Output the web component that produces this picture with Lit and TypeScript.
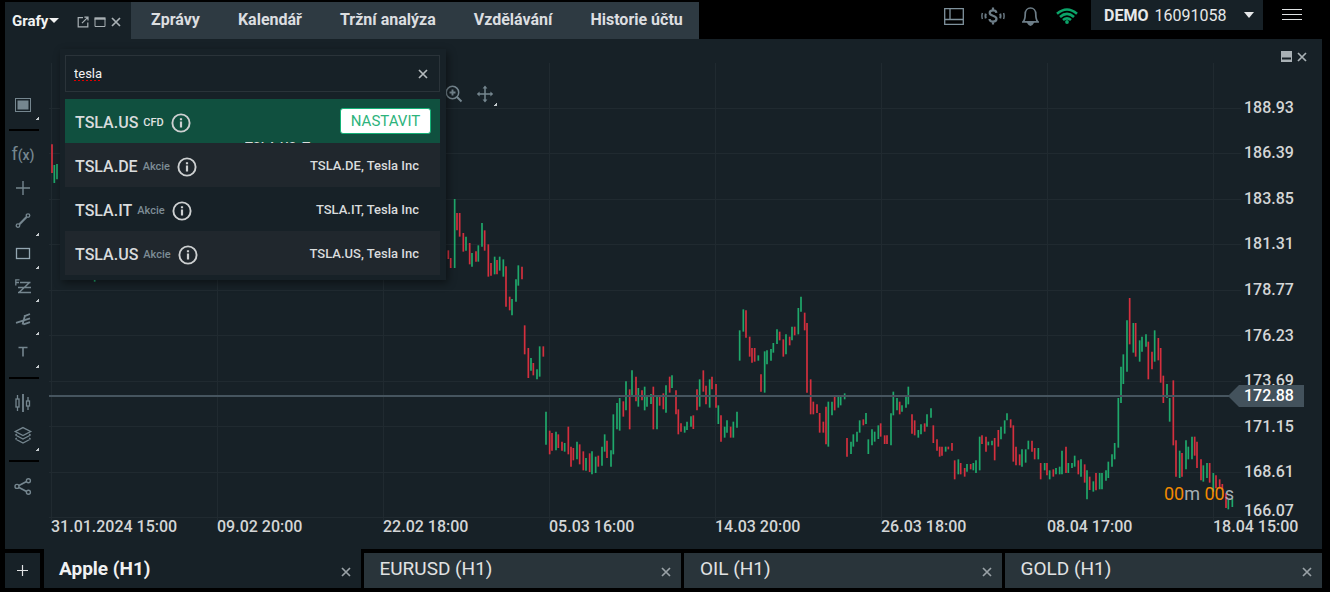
import { LitElement, html, svg, css } from "lit";
import { customElement, property, state } from "lit/decorators.js";
import { classMap } from "lit/directives/class-map.js";

type Bar = { x: number; top: number; bottom: number; up: boolean };

/* Each run holds bars as "x top bottom direction", in thirds of a chart unit from the run's origin. */
const RUNS: { x: number; y: number; bars: string }[] = [
  {
    x: 0,
    y: 85,
    bars: "156 178 264 r,163 240 294 g,171 237 283 g,284 570 590 g",
  },
  {
    x: 440,
    y: 180,
    bars:
      "25 211 237 r,32 234 264 r,44 57 264 g,51 99 151 r,59 99 170 r,70 159 215 r,78 170 212 g,89 189 253 r," +
      "96 219 260 g,108 214 245 r,115 196 245 g,126 129 200 g,134 151 212 r,145 193 290 r,153 249 287 r," +
      "164 230 283 g,171 240 283 r,179 230 272 g,190 238 290 g,198 259 380 r,209 350 391 r,216 357 406 g," +
      "228 298 365 g,235 256 317 g,246 260 298 r,254 436 523 r,265 504 594 r,273 534 572 g,280 549 586 r," +
      "291 568 598 g,299 499 590 g,310 499 530 r,318 695 794 g,329 752 823 r,336 759 812 r,348 755 811 g," +
      "355 763 804 r,366 785 812 r,374 789 815 g,385 740 823 r,393 800 860 r,400 804 841 r,411 785 838 g," +
      "419 793 853 r,430 814 871 r,438 834 872 g,449 820 876 r,456 814 883 g,467 830 879 g,475 827 860 r," +
      "486 800 857 g,494 763 815 g,501 782 834 r,513 811 860 g,520 703 823 g,531 669 748 g,539 654 752 g," +
      "550 664 710 r,558 604 691 g,569 628 748 r,576 571 645 g,588 590 664 r,595 624 680 g,606 631 661 r," +
      "614 620 691 g,621 650 680 g,633 642 672 g,640 620 748 r,651 648 748 g,659 650 677 r,670 640 688 r," +
      "678 616 698 g,689 590 638 r,696 586 624 g,708 631 703 r,715 688 763 r",
  },
  {
    x: 660,
    y: 280,
    bars:
      "63 430 455 r,74 439 458 g,81 425 450 g,93 409 440 g,100 406 447 r,111 328 391 r,119 298 380 g," +
      "130 271 335 r,138 317 373 r,149 298 383 g,156 290 328 r,168 312 383 r,175 376 432 g,183 406 485 r," +
      "194 440 473 g,201 421 458 g,212 440 473 r,220 425 473 g,231 395 443 g,239 151 242 g,250 88 155 g," +
      "258 91 173 r,269 170 230 r,276 204 248 r,284 204 245 r,295 226 242 g,303 283 335 r,314 214 338 g," +
      "321 211 253 g,333 207 242 g,340 189 218 g,351 148 192 g,359 155 181 r,370 178 230 r,378 163 223 g," +
      "389 170 196 r,396 140 181 g,404 140 166 r,415 84 163 g,423 50 95 g,434 98 151 r,441 129 338 r," +
      "452 298 403 r,460 365 403 r,471 373 399 r,479 399 458 r,490 425 458 r,498 380 493 r,505 365 500 g," +
      "516 365 406 g,524 350 391 r,535 348 383 g,542 348 376 g,554 340 358 g,561 474 530 r,573 485 522 g," +
      "580 463 500 g,591 455 485 g,599 421 458 g,610 418 436 r,618 399 432 g,625 478 522 g,636 448 496 g," +
      "644 455 485 g,655 436 477 g",
  },
  {
    x: 880,
    y: 280,
    bars:
      "2 430 470 r,14 466 492 r,21 466 492 r,33 400 496 g,40 335 406 g,51 354 391 g,59 365 403 r,66 376 395 g," +
      "78 350 383 g,85 320 373 g,96 403 461 r,104 421 466 r,115 450 473 g,123 433 463 g,134 430 455 r," +
      "141 403 440 g,153 385 413 g,160 436 489 r,171 478 512 r,179 500 530 r,186 500 527 r,197 500 515 g," +
      "205 500 508 r,216 489 512 r,224 541 598 r,235 538 583 g,242 549 583 r,254 564 590 r,261 552 575 g," +
      "272 552 568 r,280 549 571 g,288 541 579 g,299 470 571 g,306 466 492 r,318 470 515 r,325 485 496 g," +
      "336 482 496 g,344 474 541 r,355 450 500 r,363 440 478 g,374 421 461 g,381 400 421 g,392 418 443 r," +
      "400 436 545 r,408 500 556 r,419 523 556 r,426 508 560 g,437 508 548 g,445 482 508 g,456 482 515 r," +
      "464 504 538 r,475 504 538 g,482 549 598 r,494 549 571 g,501 549 586 r,509 571 598 g,520 568 590 r," +
      "528 564 583 g,539 560 583 g,546 512 583 g,558 500 579 r,565 549 579 g,576 549 564 g,584 527 560 g," +
      "595 541 583 r,603 538 590 g,614 553 608 r,621 571 658 g,629 590 630 r,640 604 635 g,648 579 631 r," +
      "659 579 628 g,666 579 628 g,678 571 602 g,685 545 594 g,696 523 560 g,704 489 538 g,715 354 503 g",
  },
  {
    x: 1090,
    y: 280,
    bars:
      "93 260 369 g,100 223 312 g,111 121 275 g,119 54 193 r,130 129 218 g,137 129 230 r,149 181 245 g," +
      "156 170 215 g,168 163 200 g,175 185 298 r,186 215 268 r,194 151 245 g,205 174 241 r,212 204 308 r," +
      "220 287 369 r,231 312 354 g,239 354 425 g,250 301 496 r,258 481 590 r,269 512 594 g,276 519 590 r," +
      "288 481 568 g,295 500 538 g,306 470 538 g,314 470 527 r,321 485 564 r,333 538 601 r,340 556 605 g," +
      "351 549 594 g,359 549 608 r,370 579 635 g,378 586 625 r,389 598 625 r,397 612 630 r,408 640 684 r," +
      "415 660 688 g,427 655 681 g",
  },
];

const BARS: Bar[] = RUNS.flatMap((run) =>
  run.bars.split(",").map((entry) => {
    const [x, top, bottom, dir] = entry.split(" ");
    return {
      x: run.x + Number(x) / 3,
      top: run.y + Number(top) / 3,
      bottom: run.y + Number(bottom) / 3,
      up: dir === "g",
    };
  })
);

const PRICES = ["188.93", "186.39", "183.85", "181.31", "178.77", "176.23", "173.69", "171.15", "168.61", "166.07"];
const DATES = [
  "31.01.2024 15:00",
  "09.02 20:00",
  "22.02 18:00",
  "05.03 16:00",
  "14.03 20:00",
  "26.03 18:00",
  "08.04 17:00",
  "18.04 15:00",
];

const cross = (size: number) => html`<svg width=${size} height=${size} viewBox="0 0 10 10" fill="none" stroke="currentColor" stroke-width="1.7" aria-hidden="true">
  <path d="M1 1 9 9M9 1 1 9" />
</svg>`;

const infoIcon = html`<svg width="20" height="20" viewBox="0 0 20 20" fill="none" aria-hidden="true">
  <circle cx="10" cy="10" r="8.6" stroke="currentColor" stroke-width="1.9" />
  <path d="M10 8.6V14.6M10 5.2V7.2" stroke="currentColor" stroke-width="2.2" />
</svg>`;

const resets = css`
  :host,
  *,
  *::before,
  *::after {
    box-sizing: border-box;
  }
  button,
  input {
    font: inherit;
    color: inherit;
    background: none;
    border: 0;
    margin: 0;
    padding: 0;
  }
  button {
    cursor: pointer;
    display: inline-flex;
    align-items: center;
  }
  svg {
    display: block;
    flex: none;
  }
`;

@customElement("top-bar")
export class TopBar extends LitElement {
  static styles = [
    resets,
    css`
      :host {
        display: flex;
        justify-content: space-between;
        align-items: flex-start;
        height: 39px;
        font-size: 16px;
        color: #dcdee0;
      }
      nav {
        display: flex;
        height: 39px;
        padding-top: 2px;
        font-weight: 700;
      }
      .charts {
        display: flex;
        width: 126px;
        padding: 0 10px 0 7px;
        background: #172127;
        align-items: center;
        justify-content: space-between;
      }
      .charts-name {
        gap: 1px;
        font-size: 15px;
        color: #f1f2f2;
      }
      .window {
        display: flex;
        gap: 5px;
        padding-top: 3px;
        color: #a9b1b5;
      }
      .sections {
        display: flex;
        gap: 38px;
        padding: 0 16px 0 20px;
        background: #2e3a42;
      }
      .sections a {
        color: inherit;
        text-decoration: none;
        line-height: 36px;
      }
      .status {
        display: flex;
        align-items: flex-start;
      }
      .icons {
        display: flex;
        align-items: center;
        gap: 17px;
        height: 32px;
        padding-right: 13px;
        color: #6d7d87;
      }
      .account {
        height: 30px;
        width: 172px;
        padding: 0 9px 0 13px;
        gap: 6px;
        font-size: 16px;
        background: #172127;
        color: #e6e8e9;
      }
      .account svg {
        margin-left: auto;
      }
      .menu {
        height: 30px;
        padding: 0 20px 0 19px;
        color: #dfe2e3;
      }
    `,
  ];

  render() {
    return html`
      <nav>
        <div class="charts">
          <button class="charts-name">
            Grafy
            <svg width="10" height="5" viewBox="0 0 10 5" fill="currentColor" aria-hidden="true"><path d="M0 0H10L5 5Z" /></svg>
          </button>
          <span class="window">
            <button aria-label="Otevřít v novém okně">
              <svg width="12" height="12" viewBox="0 0 12 12" fill="none" stroke="currentColor" stroke-width="1.2">
                <path d="M6 1.6H1.2V10.8H10.8V6.5M5 7.2 10.3 1.8M7.4 1.2H11V4.6" />
              </svg>
            </button>
            <button aria-label="Maximalizovat">
              <svg width="12" height="12" viewBox="0 0 12 12" fill="none" stroke="currentColor">
                <path d="M1 2.5V10.5H11V2.5" /><path d="M.5 2.5H11.5" stroke-width="2.4" />
              </svg>
            </button>
            <button aria-label="Zavřít">${cross(10)}</button>
          </span>
        </div>
        <div class="sections">
          <a href="#zpravy">Zprávy</a>
          <a href="#kalendar">Kalendář</a>
          <a href="#analyza">Tržní analýza</a>
          <a href="#vzdelavani">Vzdělávání</a>
          <a href="#historie">Historie účtu</a>
        </div>
      </nav>
      <div class="status">
        <div class="icons">
          <button aria-label="Rozložení">
            <svg width="20" height="17" viewBox="0 0 20 17" fill="none" stroke="#7f929d" stroke-width="1.3">
              <path d="M.7.7H19.3V16.3H.7ZM.7 11.5H19.3M6 .7V11.5" />
            </svg>
          </button>
          <button aria-label="Obchodování">
            <svg width="24" height="18" viewBox="0 0 24 18" fill="none" stroke="currentColor">
              <path d="M15.4 5.8C15.2 4.2 13.8 3.4 12 3.4 9.8 3.4 8.7 4.5 8.7 6 8.7 9.4 15.5 8 15.5 11.8 15.5 13.5 14.2 14.6 12 14.6 9.9 14.6 8.6 13.6 8.5 12M12 .6V3.4M12 14.6V17.4" stroke-width="2.2" />
              <path d="M4.8 6.6Q4 9 4.8 11.4M19.2 6.6Q20 9 19.2 11.4" stroke-width="2" />
              <path d="M1.4 6Q.4 9 1.4 12M22.6 6Q23.6 9 22.6 12" stroke-width="1.4" />
            </svg>
          </button>
          <button aria-label="Upozornění">
            <svg width="17" height="19" viewBox="0 0 17 19" fill="none" stroke="currentColor" stroke-width="1.7">
              <path d="M1 14.8C3 13 3.2 11.4 3.2 7.2 3.2 3.6 5.5 1 8.5 1S13.8 3.6 13.8 7.2C13.8 11.4 14 13 16 14.8Z" />
              <path d="M5.8 15.6Q8.5 20.6 11.2 15.6Z" fill="currentColor" />
            </svg>
          </button>
          <svg width="22" height="16" viewBox="0 0 22 16" fill="none" stroke="#0ba368" stroke-width="2.6" role="img" aria-label="Připojeno">
            <path d="M1 5.8Q11-2.8 21 5.8M4 9Q11 2.8 18 9M7 12.1Q11 8.6 15 12.1" />
            <circle cx="11" cy="14" r="1.9" fill="#0ba368" stroke="none" />
          </svg>
        </div>
        <button class="account" aria-haspopup="listbox">
          <b>DEMO</b><span>16091058</span>
          <svg width="10" height="6" viewBox="0 0 10 6" fill="currentColor" aria-hidden="true"><path d="M0 0H10L5 6Z" /></svg>
        </button>
        <button class="menu" aria-label="Nabídka">
          <svg width="20" height="12" viewBox="0 0 20 12" stroke="currentColor"><path d="M0 .5H20M0 5.5H20M0 10.5H20" /></svg>
        </button>
      </div>
    `;
  }
}

const TOOLS: { label: string; more?: boolean; divider?: boolean; icon: unknown }[] = [
  {
    label: "Vzhled",
    more: true,
    icon: svg`<rect x="4.5" y="5.5" width="15" height="13" /><rect x="6.5" y="7.5" width="11" height="9" fill="currentColor" stroke="none" />`,
  },
  { label: "Indikátory", divider: true, icon: null },
  { label: "Kříž", icon: svg`<path d="M12 5V19M5 12H19" stroke-width="1.4" />` },
  {
    label: "Čára",
    more: true,
    icon: svg`<circle cx="7" cy="16.6" r="1.8" stroke-width="1.3" /><circle cx="17" cy="6.6" r="1.8" stroke-width="1.3" /><path d="M8.4 15.2 15.6 8" stroke-width="2.2" />`,
  },
  { label: "Obdélník", more: true, icon: svg`<rect x="5.5" y="6.5" width="13" height="10" stroke="#93a6b1" stroke-width="1.3" />` },
  {
    label: "Fibonacci",
    more: true,
    icon: svg`<path d="M4.8 10.5V4.8H8.5M4.8 7.5H8" stroke-width="1.3" /><path d="M9 7.5H19.5M7 12.5H20M7 17.5H20M18.5 7.5 8 17.5" stroke-width="1.5" />`,
  },
  {
    label: "Vidle",
    more: true,
    icon: svg`<path d="M5 14.8 19 10.4M13 8.4 19 6M12.5 16.4 19 14.2M11.5 16.6 14 7.6" stroke-width="1.8" />`,
  },
  { label: "Text", more: true, icon: svg`<path d="M7.5 6.5H16.5M12 6.5V15.5" stroke-width="1.6" />` },
  {
    label: "Typ grafu",
    divider: true,
    icon: svg`<g stroke-width="1.3"><rect x="5" y="8" width="3" height="8" /><path d="M6.5 4V8M6.5 16V20" /><path d="M12 3V21" stroke-width="1.8" /><rect x="15.5" y="10" width="3" height="5" /><path d="M17 6V10M17 15V19" /></g>`,
  },
  {
    label: "Vrstvy",
    more: true,
    icon: svg`<path d="M12 3.6 19.6 7.5 12 11.5 4.4 7.5ZM4.4 11 12 15 19.6 11M4.4 11 5.8 10.2M19.6 11 18.2 10.2M4.4 15 12 19 19.6 15M4.4 15 5.8 14.2M19.6 15 18.2 14.2" stroke-width="1.4" />`,
  },
  {
    label: "Sdílet",
    divider: true,
    icon: svg`<circle cx="6" cy="12.4" r="2" stroke-width="1.4" /><circle cx="17.4" cy="6.8" r="2" stroke-width="1.4" /><circle cx="17.4" cy="18.2" r="2" stroke-width="1.4" /><path d="M8 11.4 15.6 7.6M8 13.4 15.6 17.4" stroke-width="1.7" />`,
  },
];

@customElement("tool-bar")
export class ToolBar extends LitElement {
  static styles = [
    resets,
    css`
      :host {
        display: flex;
        flex-direction: column;
        padding: 49px 0 0 2px;
        color: #75868f;
      }
      button {
        position: relative;
        width: 32px;
        height: 33px;
        justify-content: center;
      }
      hr {
        width: 30px;
        height: 2px;
        margin: 8px 0 7px 2px;
        border: 0;
        background: #000;
      }
      .fx {
        display: flex;
        align-items: baseline;
        font-size: 18px;
        line-height: 20px;
      }
      .fx small {
        font-size: 14px;
        font-weight: 500;
      }
      .more::after {
        content: "";
        position: absolute;
        right: 0;
        bottom: 1px;
        width: 3px;
        height: 3px;
        background: linear-gradient(135deg, transparent 40%, #c4cacd 40%);
      }
    `,
  ];

  render() {
    return TOOLS.map(
      (tool) => html`
        ${tool.divider ? html`<hr />` : null}
        <button class=${classMap({ more: !!tool.more })} aria-label=${tool.label}>
          ${tool.icon
            ? html`<svg width="24" height="24" viewBox="0 0 24 24" fill="none" stroke="currentColor">${tool.icon}</svg>`
            : html`<span class="fx">f<small>(x)</small></span>`}
        </button>
      `
    );
  }
}

@customElement("price-chart")
export class PriceChart extends LitElement {
  static styles = [
    resets,
    css`
      :host {
        display: grid;
        grid-template-rows: 1fr 31px;
        padding-top: 24px;
        font-size: 16px;
        font-weight: 500;
        color: #d3d5d6;
      }
      .plot {
        position: relative;
        display: grid;
        grid-template-columns: 1fr 81px;
        min-height: 360px;
      }
      .canvas {
        width: 100%;
        height: 100%;
        contain: size;
        overflow: visible;
      }
      .grid {
        stroke: #202a30;
        stroke-width: 1;
      }
      .up {
        stroke: #1fa86b;
      }
      .down {
        stroke: #d42f3e;
      }
      .bars {
        stroke-width: 1.7;
      }
      .level {
        stroke: #46555f;
        stroke-width: 2;
      }
      .prices {
        display: grid;
        grid-template-rows: repeat(9, 1fr) 23px;
        margin: 22px 0 0;
        padding: 0 0 0 3px;
        list-style: none;
        line-height: 14px;
        align-items: center;
      }
      .prices li:last-child {
        align-self: end;
      }
      .dates {
        display: grid;
        grid-template-columns: repeat(7, 1fr) 109px;
        margin: 0;
        padding: 0 0 0 2px;
        list-style: none;
        line-height: 18px;
        white-space: nowrap;
      }
      .current {
        position: absolute;
        right: 18px;
        top: 73.2%;
        width: 76px;
        margin-top: -11px;
        padding-left: 16px;
        line-height: 22px;
        background: #43525c;
        color: #fff;
        clip-path: polygon(0 50%, 11px 0, 100% 0, 100% 100%, 11px 100%);
      }
      .countdown {
        position: absolute;
        right: 88px;
        bottom: 13px;
        font-size: 18px;
        font-weight: 400;
        line-height: 22px;
        color: #a6afb4;
      }
      .countdown b {
        font-weight: 400;
        color: #f28a00;
      }
    `,
  ];

  render() {
    const rows = PRICES.map((_, i) => 108.5 + i * 45.45);
    const cols = DATES.map((_, i) => 51.5 + i * 166);
    return html`
      <div class="plot">
        <svg class="canvas" viewBox="49 63 1192 455" preserveAspectRatio="none" role="img" aria-label="Apple H1">
          <g class="grid">
            ${rows.map((y) => svg`<line x1="49" x2="1241" y1=${Math.floor(y) + 0.5} y2=${Math.floor(y) + 0.5} />`)}
            ${cols.map((x) => svg`<line x1=${x} x2=${x} y1="63" y2="521" />`)}
          </g>
          <g class="bars">
            ${BARS.map((b) => svg`<line class=${b.up ? "up" : "down"} x1=${b.x} x2=${b.x} y1=${b.top} y2=${b.bottom} />`)}
          </g>
          <line class="level" x1="49" x2="1241" y1="396" y2="396" />
        </svg>
        <ul class="prices">
          ${PRICES.map((p) => html`<li>${p}</li>`)}
        </ul>
        <div class="current">172.88</div>
        <div class="countdown"><b>00</b>m <b>00</b>s</div>
      </div>
      <ul class="dates">
        ${DATES.map((d) => html`<li>${d}</li>`)}
      </ul>
    `;
  }
}

type Hit = { symbol: string; kind: string; name: string };

@customElement("symbol-search")
export class SymbolSearch extends LitElement {
  @state() private hits: Hit[] = [
    { symbol: "TSLA.US", kind: "CFD", name: "TSLA.US, Tesla Inc" },
    { symbol: "TSLA.DE", kind: "Akcie", name: "TSLA.DE, Tesla Inc" },
    { symbol: "TSLA.IT", kind: "Akcie", name: "TSLA.IT, Tesla Inc" },
    { symbol: "TSLA.US", kind: "Akcie", name: "TSLA.US, Tesla Inc" },
  ];

  static styles = [
    resets,
    css`
      :host {
        display: block;
        padding: 6px 6px 5px 5px;
        background: #172127;
        box-shadow: 2px 3px 8px rgba(0, 0, 0, 0.45);
        color: #d9dcdd;
      }
      .field {
        display: flex;
        align-items: center;
        height: 37px;
        margin-bottom: 7px;
        padding: 0 11px 0 8px;
        border: 1px solid #2a3339;
        color: #b4babd;
      }
      .field input {
        flex: 1;
        min-width: 0;
        outline: 0;
        font-size: 13px;
        color: #f2f3f3;
        text-decoration: underline dotted #e00000 2px;
        text-underline-offset: 2px;
      }
      .hits {
        margin: 0;
        padding: 0;
        list-style: none;
      }
      .hit {
        display: grid;
        grid-template-columns: auto auto auto 1fr;
        grid-template-rows: 44px;
        align-items: center;
        height: 44px;
        padding: 0 21px 0 10px;
        overflow: hidden;
        font-weight: 500;
      }
      .hit:nth-child(even) {
        background: #20272d;
      }
      .hit.active {
        padding-right: 9px;
        background: #10503f;
      }
      .symbol {
        font-size: 16px;
        line-height: 44px;
        padding-top: 3px;
      }
      .kind {
        margin: 0 7px 0 5px;
        padding-top: 3px;
        font-size: 11px;
        color: #7d8c95;
      }
      .active .kind {
        color: #e0e4e3;
      }
      .info {
        padding-top: 3px;
        color: #cdd0d1;
      }
      .name {
        justify-self: end;
        font-size: 13px;
      }
      .active .name {
        grid-column: 1 / -1;
        align-self: start;
        width: 75px;
        margin: -4px 111px 0 0;
        overflow: hidden;
        white-space: nowrap;
        text-overflow: ellipsis;
      }
      .setup {
        justify-self: end;
        justify-content: center;
        width: 91px;
        height: 26px;
        border: 1px solid #14b177;
        border-radius: 3px;
        background: #fff;
        color: #2db37c;
        font-size: 15px;
        font-weight: 400;
      }
    `,
  ];

  render() {
    return html`
      <div class="field">
        <input type="text" value="tesla" aria-label="Hledat" spellcheck="false" />
        <button aria-label="Vymazat">${cross(10)}</button>
      </div>
      <ul class="hits">
        ${this.hits.map(
          (hit, i) => html`
            <li class=${classMap({ hit: true, active: i === 0 })}>
              <span class="symbol">${hit.symbol}</span>
              <span class="kind">${hit.kind}</span>
              <button class="info" aria-label="Informace">${infoIcon}</button>
              ${i === 0 ? html`<button class="setup">NASTAVIT</button>` : null}
              <span class="name">${hit.name}</span>
            </li>
          `
        )}
      </ul>
    `;
  }
}

@customElement("chart-tabs")
export class ChartTabs extends LitElement {
  @property({ type: Array }) tabs: string[] = [];
  @property({ type: Number }) active = 0;

  static styles = [
    resets,
    css`
      :host {
        display: flex;
        align-items: flex-end;
        gap: 3px;
        height: 39px;
        font-size: 19px;
        color: #e0e2e3;
      }
      .add {
        width: 35px;
        height: 35px;
        margin-right: 1px;
        justify-content: center;
        background: #172127;
      }
      .tab {
        display: flex;
        flex: 1;
        height: 35px;
        padding: 0 10px 0 16px;
        background: #29343a;
      }
      .tab.active {
        height: 39px;
        padding-top: 4px;
        padding-left: 15px;
        background: #172127;
        color: #f0f1f2;
        font-weight: 700;
      }
      .label {
        flex: 1;
        height: 31px;
      }
      .close {
        padding-top: 2px;
        color: #99a1a6;
      }
    `,
  ];

  render() {
    return html`
      <button class="add" aria-label="Přidat graf">
        <svg width="11" height="11" viewBox="0 0 11 11" stroke="currentColor"><path d="M5.5 0V11M0 5.5H11" stroke-width="1.2" /></svg>
      </button>
      ${this.tabs.map(
        (tab, i) => html`
          <div class=${classMap({ tab: true, active: i === this.active })}>
            <button class="label" @click=${() => (this.active = i)}>${tab}</button>
            <button class="close" aria-label="Zavřít">${cross(10)}</button>
          </div>
        `
      )}
    `;
  }
}

@customElement("app-root")
export class AppRoot extends LitElement {
  static styles = [
    resets,
    css`
      :host {
        display: flex;
        flex-direction: column;
        min-height: 100vh;
        padding: 0 8px 4px 5px;
        background: #000;
        font-family: Roboto, "Noto Sans", sans-serif;
      }
      .workspace {
        position: relative;
        display: grid;
        grid-template-columns: 44px 1fr;
        flex: 1;
        background: #172127;
      }
      .search {
        position: absolute;
        left: 55px;
        top: 10px;
        width: 386px;
      }
      .chart-tools {
        position: absolute;
        left: 440px;
        top: 45px;
        display: flex;
        gap: 13px;
        color: #75868f;
      }
      .pan {
        position: relative;
      }
      .pan::after {
        content: "";
        position: absolute;
        right: -3px;
        bottom: -2px;
        width: 3px;
        height: 3px;
        background: linear-gradient(135deg, transparent 40%, #c4cacd 40%);
      }
      .controls {
        position: absolute;
        right: 15px;
        top: 12px;
        display: flex;
        align-items: center;
        gap: 5px;
        color: #a9b1b5;
      }
    `,
  ];

  render() {
    return html`
      <top-bar></top-bar>
      <main class="workspace">
        <tool-bar></tool-bar>
        <price-chart></price-chart>
        <div class="chart-tools">
          <button aria-label="Přiblížit">
            <svg width="18" height="20" viewBox="0 0 18 20" fill="none" stroke="currentColor" stroke-width="1.5">
              <circle cx="7.5" cy="8.5" r="6.2" />
              <path d="M7.5 5.5V11.5M4.5 8.5H10.5M12 13 16.5 17.5" stroke-width="1.9" />
            </svg>
          </button>
          <button class="pan" aria-label="Posunout">
            <svg width="18" height="20" viewBox="0 0 18 20" fill="none" stroke="currentColor" stroke-width="1.5">
              <path d="M9 3V17M2 10H16" />
              <path d="M9 1.6 11.4 4.6H6.6ZM9 18.4 11.4 15.4H6.6ZM.8 10 3.6 7.6V12.4ZM17.2 10 14.4 7.6V12.4Z" fill="currentColor" stroke="none" />
            </svg>
          </button>
        </div>
        <symbol-search class="search"></symbol-search>
        <div class="controls">
          <button aria-label="Minimalizovat">
            <svg width="11" height="11" viewBox="0 0 11 11"><path d="M0 0H11V11H0Z" fill="currentColor" /><path d="M1 7.5H10" stroke="#172127" stroke-width="2" /></svg>
          </button>
          <button aria-label="Zavřít">${cross(10)}</button>
        </div>
      </main>
      <chart-tabs .tabs=${["Apple (H1)", "EURUSD (H1)", "OIL (H1)", "GOLD (H1)"]}></chart-tabs>
    `;
  }
}
